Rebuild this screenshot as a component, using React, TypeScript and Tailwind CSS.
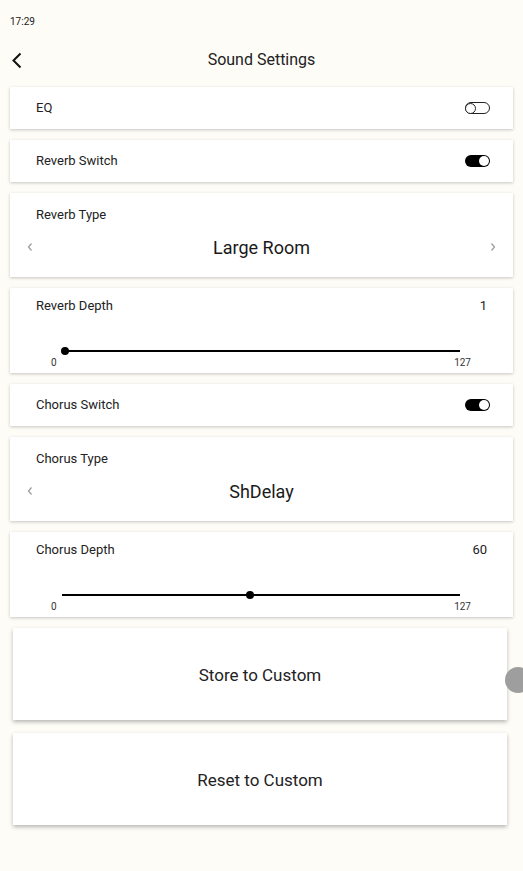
import React from 'react';

// ---- small pieces ----

const Toggle = ({ on }: { on: boolean }) =>
  on ? (
    <div className="w-[25px] h-[12px] rounded-full bg-black flex items-center justify-end pr-[1px]">
      <div className="w-[10px] h-[10px] rounded-full bg-white" />
    </div>
  ) : (
    <div className="w-[25px] h-[12px] rounded-full border border-[#222] flex items-center bg-white">
      <div className="w-[11px] h-[11px] -ml-[1px] rounded-full border border-[#222] bg-white" />
    </div>
  );

const Card = ({ children, className = '' }: { children: React.ReactNode; className?: string }) => (
  <div className={`bg-white shadow-[0_1px_3px_rgba(0,0,0,0.22)] ${className}`}>{children}</div>
);

const SwitchRow = ({ label, on }: { label: string; on: boolean }) => (
  <Card className="h-[42px] flex items-center justify-between pl-[26px] pr-[23px]">
    <span className="text-[13px] text-[#222]">{label}</span>
    <Toggle on={on} />
  </Card>
);

const Chevron = ({ dir }: { dir: 'left' | 'right' }) => (
  <svg width="8" height="10" viewBox="0 0 8 10" fill="none" stroke="#9a9a9a" strokeWidth="1.2">
    {dir === 'left' ? <path d="M5.5 1.5 L2.5 5 L5.5 8.5" /> : <path d="M2.5 1.5 L5.5 5 L2.5 8.5" />}
  </svg>
);

const TypeRow = ({ label, value, hasPrev, hasNext }: { label: string; value: string; hasPrev: boolean; hasNext: boolean }) => (
  <Card className="h-[84px] flex flex-col">
    <div className="pl-[26px] pt-[14px] text-[13px] text-[#222] leading-[16px]">{label}</div>
    <div className="flex items-center mt-[13px] pl-[15px] pr-[15px] h-[22px]">
      <div className="w-[10px] flex justify-center">{hasPrev && <Chevron dir="left" />}</div>
      <div className="flex-1 text-center text-[18px] text-[#1a1a1a]">{value}</div>
      <div className="w-[10px] flex justify-center">{hasNext && <Chevron dir="right" />}</div>
    </div>
  </Card>
);

const SliderRow = ({ label, value, max }: { label: string; value: number; max: number }) => {
  const pct = (value / max) * 100;
  return (
    <Card className="h-[85px] flex flex-col">
      <div className="flex justify-between pl-[26px] pr-[26px] pt-[10px] text-[13px] text-[#222] leading-[16px]">
        <span>{label}</span>
        <span>{value}</span>
      </div>
      {/* track */}
      <div className="relative ml-[52px] w-[398px] h-[10px] mt-[32px]">
        <div className="absolute left-0 right-0 top-[4px] h-[1.5px] bg-black" />
        <div className="absolute left-0 top-[3.5px] h-[2.5px] bg-black" style={{ width: `${pct}%` }} />
        <div
          className="absolute top-[0.5px] w-[8px] h-[8px] rounded-full bg-black -translate-x-1/2"
          style={{ left: `${pct}%` }}
        />
      </div>
      <div className="flex justify-between pl-[41px] pr-[42px] text-[10px] text-[#333] leading-[12px] mt-[1px]">
        <span>0</span>
        <span>{max}</span>
      </div>
    </Card>
  );
};

const BigButton = ({ label }: { label: string }) => (
  <div className="ml-[3px] mr-[6px] h-[92px] bg-white shadow-[0_2px_4px_rgba(0,0,0,0.28)] flex items-center justify-center">
    <span className="text-[17px] text-[#222] mt-[3px]">{label}</span>
  </div>
);

export default function App() {
  return (
    <div
      className="relative w-[523px] h-[871px] overflow-hidden bg-[#fdfcf7]"
      style={{ fontFamily: 'Roboto, "Liberation Sans", sans-serif' }}
    >
      {/* status bar */}
      <div className="h-[42px] flex items-center pl-[10px] text-[10px] text-[#222]">17:29</div>

      {/* header */}
      <div className="relative h-[36px] flex items-center justify-center">
        <svg className="absolute left-[11px]" width="12" height="17" viewBox="0 0 12 17" fill="none" stroke="#111" strokeWidth="2">
          <path d="M9.5 1.5 L2.5 8.5 L9.5 15.5" />
        </svg>
        <span className="text-[16px] text-[#222]">Sound Settings</span>
      </div>

      <div className="px-[10px] mt-[9px] flex flex-col gap-[11px]">
        <SwitchRow label="EQ" on={false} />
        <SwitchRow label="Reverb Switch" on={true} />
        <TypeRow label="Reverb Type" value="Large Room" hasPrev={true} hasNext={true} />
        <SliderRow label="Reverb Depth" value={1} max={127} />
        <SwitchRow label="Chorus Switch" on={true} />
        <TypeRow label="Chorus Type" value="ShDelay" hasPrev={true} hasNext={false} />
        <SliderRow label="Chorus Depth" value={60} max={127} />
      </div>

      <div className="px-[10px] mt-[11px] flex flex-col gap-[13px]">
        <BigButton label="Store to Custom" />
        <BigButton label="Reset to Custom" />
      </div>

      {/* floating handle on right edge */}
      <div className="absolute right-[-8px] top-[667px] w-[26px] h-[26px] rounded-full bg-[#9e9e9e]" />
    </div>
  );
}
